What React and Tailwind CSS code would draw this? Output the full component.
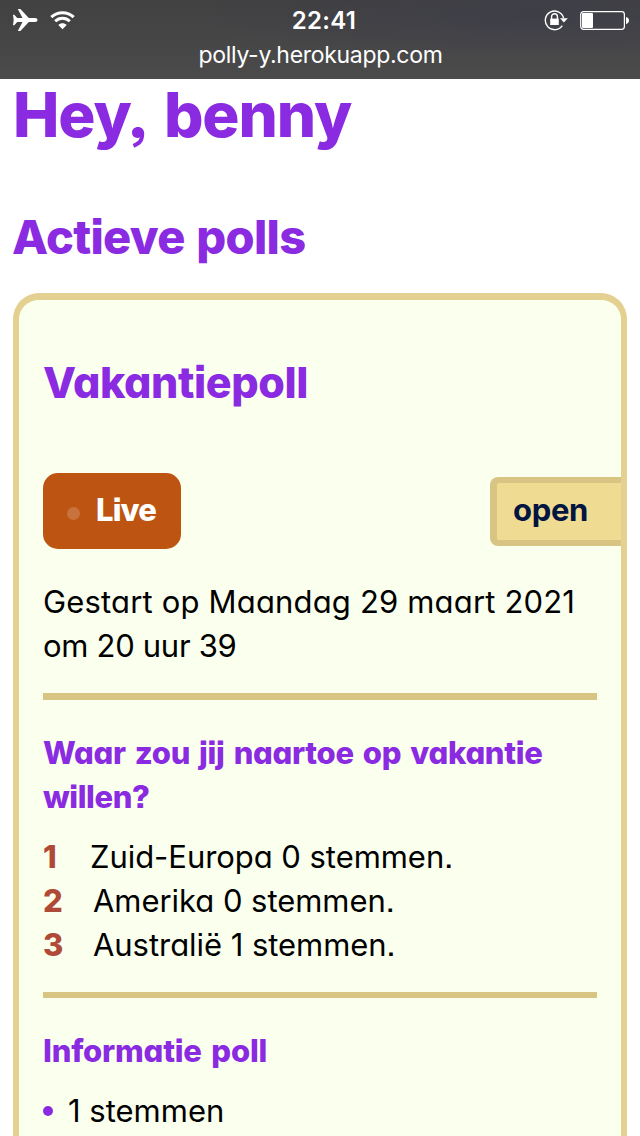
import React from "react";

const answers = [
  { rank: 1, text: "Zuid-Europa 0 stemmen.", rankClass: "w-[47px]" },
  { rank: 2, text: "Amerika 0 stemmen.", rankClass: "w-[50px]" },
  { rank: 3, text: "Australië 1 stemmen.", rankClass: "w-[50px]" },
];

function StatusBar() {
  return (
    <header className="h-[79px] shrink-0 bg-linear-to-b from-[#414142] to-[#4b4b4c] text-white">
      <div className="h-full bg-[radial-gradient(ellipse_at_84%_20%,#3a3a4c80,transparent_45%)]">
        <div className="flex h-10 items-center justify-between pr-[11px] pl-[13px]">
          <div className="flex w-[100px] items-center gap-3">
            <svg width="25" height="24" viewBox="0 0 25 24" fill="currentColor">
              <path d="M0 6.8h1.3l2.9 3.1h5.3L4.8 1h2.6l8.4 9h6.2c1.6 0 2.5.9 2.5 2s-.9 2-2.5 2h-6.2l-8.4 9H4.8l4.7-8.9H4.2l-2.9 3.1H0l.7-5.2Z" />
            </svg>
            <svg width="25" height="20" viewBox="0 0 25 20" fill="none" stroke="currentColor" strokeWidth="3">
              <path d="M1.3 7.2C7.7 1.1 17.3 1.1 23.7 7.2" />
              <path d="M5.2 11.3c4.1-4 10.5-4 14.6 0" />
              <path d="M12.5 19.2 8.3 15c2.4-2.3 6-2.3 8.4 0Z" fill="currentColor" stroke="none" />
            </svg>
          </div>
          <div className="mt-0.5 pl-1.5 text-[24px] leading-10 font-semibold tracking-[0.3px]">22:41</div>
          <div className="flex w-[100px] items-center justify-end gap-3">
            <svg width="24" height="22" viewBox="0 0 24 22" fill="none" stroke="currentColor" strokeWidth="1.4">
              <path d="M19.6 9A9.3 9.3 0 1 0 18.3 16.6" />
              <path d="M16 9.2h7.8l-3.9 4.4Z" fill="currentColor" stroke="none" />
              <path d="M7.6 10V7.6a2.9 2.9 0 0 1 5.8 0V10" />
              <path d="M6.2 9.6h8.6v6.4H6.2Z" fill="currentColor" stroke="none" />
            </svg>
            <svg width="49" height="19" viewBox="0 0 49 19">
              <rect x=".7" y=".7" width="43.7" height="17.6" rx="2.8" fill="none" stroke="currentColor" strokeWidth="1.2" />
              <rect x="2" y="2" width="11" height="15" rx="1" fill="currentColor" />
              <path d="M46 6c1.8.3 3 1.8 3 3.5s-1.2 3.2-3 3.5Z" fill="currentColor" />
            </svg>
          </div>
        </div>
        <div className="pl-px text-center text-[23px] leading-[30px] font-normal tracking-[-0.3px]">
          polly-y.herokuapp.com
        </div>
      </div>
    </header>
  );
}

function Card() {
  return (
    <section className="mx-[13px] mt-8 h-[900px] rounded-t-[26px] border-x-[6px] border-t-[7px] border-[#e4d090] bg-[#fbffee] pl-6">
      <h3 className="mt-[60px] text-[43px] leading-[44px] font-extrabold tracking-[-0.4px] text-[#8a2be2]">
        <span>Vakantiepoll</span>
      </h3>
      <div className="mt-[69px] flex h-[76px] items-center justify-between">
        <div className="flex h-[76px] w-[138px] items-center rounded-[15px] bg-[#bd5411] pl-6 text-white">
          <i className="mt-[5px] size-[13px] rounded-full bg-[#c8733d]" />
          <span className="mb-0.5 ml-4 text-[31px] leading-[44px] font-extrabold tracking-[-0.9px]">Live</span>
        </div>
        <button className="flex h-[69px] w-[131px] items-center rounded-l-[8px] border-y-[6px] border-l-[7px] border-[#d8c583] bg-[#efdb92] pl-4 text-[31px] leading-[44px] font-bold tracking-[-0.3px] text-[#001540]">
          <span className="mb-0.5">open</span>
        </button>
      </div>
      <p className="mt-[31px] text-[31px] leading-[44px]">
        <span className="block whitespace-nowrap tracking-[0.17px]">Gestart op Maandag 29 maart 2021</span>
        <span className="block whitespace-nowrap tracking-[-0.3px]">om 20 uur 39</span>
      </p>
      <div className="mt-[25px] mr-6 h-[7px] bg-[#d8c583]" />
      <h4 className="mt-[31px] text-[31px] leading-[44px] font-extrabold text-[#8a2be2]">
        <span className="block whitespace-nowrap tracking-[-0.3px] [word-spacing:2.6px]">Waar zou jij naartoe op vakantie</span>
        <span className="block whitespace-nowrap tracking-[-0.4px]">willen?</span>
      </h4>
      <ol className="mt-4 text-[31px] leading-[44px]">
        {answers.map((a) => (
          <li key={a.rank} className="flex whitespace-nowrap">
            <b className={"font-extrabold text-[#b04a38] " + a.rankClass}>{a.rank}</b>
            <span className="tracking-[-0.05px]">{a.text}</span>
          </li>
        ))}
      </ol>
      <div className="mt-[25px] mr-6 h-[6px] bg-[#d8c583]" />
      <h4 className="mt-[31px] text-[31px] leading-[44px] font-extrabold tracking-[-0.2px] text-[#8a2be2] [word-spacing:3px]">
        <span>Informatie poll</span>
      </h4>
      <div className="mt-4 flex items-center text-[31px] leading-[44px]">
        <i className="size-[10px] rounded-full bg-[#8a2be2]" />
        <span className="ml-[15px]">1 stemmen</span>
      </div>
    </section>
  );
}

export default function App() {
  return (
    <div className="flex h-[1136px] w-[640px] flex-col overflow-hidden bg-white font-['Inter',sans-serif] text-black">
      <StatusBar />
      <main className="[font-feature-settings:'cv11','ss03','ss07']">
        <h1 className="mt-[4px] ml-[13px] text-[62px] leading-[64px] font-extrabold tracking-[-1.1px] text-[#8a2be2] [word-spacing:5px]">
          <span>Hey, benny</span>
        </h1>
        <h2 className="mt-[66px] ml-3 text-[47px] leading-[48px] font-extrabold tracking-[-0.7px] text-[#8a2be2] [word-spacing:2px]">
          <span>Actieve polls</span>
        </h2>
        <Card />
      </main>
    </div>
  );
}
